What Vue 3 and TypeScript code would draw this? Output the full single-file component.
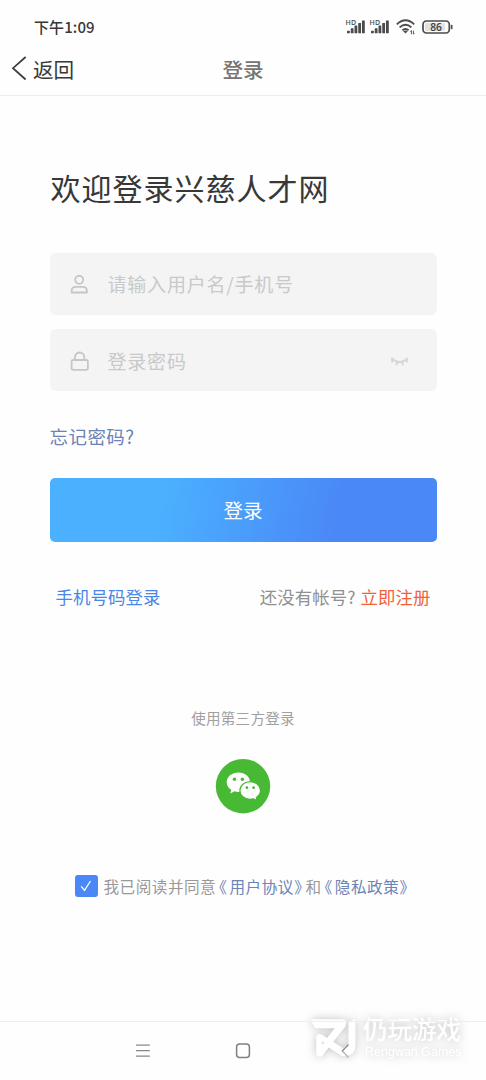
<script setup lang="ts">
import { ref } from 'vue'

const account = ref('')
const password = ref('')
const agreed = ref(true)
const bars: number[] = [0, 1, 2, 3, 4]
const documents: string[] = ['用户协议', '隐私政策']
</script>

<template>
  <div class="screen">
    <div class="status">
      <span class="time">下午1:09</span>
      <div class="indicators">
        <svg v-for="sim in 2" :key="sim" class="signal" width="20" height="16" viewBox="0 0 20 16">
          <text x="-.5" y="5.6" class="hd">HD</text>
          <rect v-for="b in bars" :key="b" :x="1 + b * 3.75" :y="11.8 - b * 2.6" width="2.8" :height="2.4 + b * 2.6" rx=".5" fill="#4b4b4b" />
        </svg>
        <svg class="wifi" width="20" height="16" viewBox="0 0 20 16" fill="none" stroke="#4b4b4b" stroke-width="1.9">
          <path d="M.8 5.4Q9.5-2.7 18.2 5.4M3.6 8.4Q9.5 3 15.4 8.4M6.4 11.3Q9.5 8.6 12.6 11.3" />
          <path d="M7.2 12.2Q9.5 10.8 11.8 12.2L9.5 14.6Z" fill="#4b4b4b" stroke="none" />
          <path d="M15.4 15.2V11.6l-1 1.2M17.4 11.6v3.6l1-1.2" stroke-width=".9" />
        </svg>
        <svg class="battery" width="32" height="14" viewBox="0 0 32 14">
          <rect x="1" y="1" width="26.3" height="12" rx="3.4" fill="#fff" stroke="#4b4b4b" stroke-width="1.7" />
          <rect x="3" y="3" width="20" height="8" rx="1.5" fill="#e2e2e2" />
          <rect x="28.8" y="4.8" width="1.7" height="4.5" rx=".8" fill="#4b4b4b" />
          <text x="14" y="10.7" text-anchor="middle" class="level">86</text>
        </svg>
      </div>
    </div>

    <header class="nav">
      <a class="back">
        <svg width="16" height="26" viewBox="0 0 16 26" fill="none" stroke="#3c3c3c" stroke-width="1.7"><path d="M14.6 2 2 13.2 14.6 24.5" /></svg>
        <span>返回</span>
      </a>
      <span class="nav-title">登录</span>
    </header>

    <main class="content">
      <h1>欢迎登录兴慈人才网</h1>
      <label class="field first">
        <svg width="20" height="20" viewBox="0 0 20 20" fill="none" stroke="#c6c6c6" stroke-width="1.8">
          <circle cx="9.2" cy="5.8" r="4" />
          <path d="M1.6 18.5V17Q1.6 12.8 6 12.8H12.6Q16.9 12.8 16.9 17V18.5Z" stroke-linejoin="round" />
        </svg>
        <input v-model="account" type="text" placeholder="请输入用户名/手机号" />
      </label>
      <label class="field second">
        <svg width="20" height="20" viewBox="0 0 20 20" fill="none" stroke="#c6c6c6" stroke-width="1.8">
          <rect x="1.6" y="9" width="16.3" height="9.8" rx="1.5" />
          <path d="M4.9 9V6.2a4.7 4.7 0 0 1 9.4 0V9" />
        </svg>
        <input v-model="password" type="password" placeholder="登录密码" />
        <svg class="eye" width="18" height="10" viewBox="0 0 18 10" fill="none" stroke="#d6d6d6">
          <path d="M.3 2Q9 10.2 16.7 2" stroke-width="2.4" />
          <path d="M1.8 3 1 6.4M6.2 5.8l-.8 3.4M11.1 5.8l.8 3.4M15.2 3 16.2 6.4" stroke-width="2" />
        </svg>
      </label>
      <a class="forgot">忘记密码?</a>
      <button class="submit" type="button">登录</button>
      <div class="links">
        <a class="phone">手机号码登录</a>
        <span class="register">还没有帐号?<a>立即注册</a></span>
      </div>
      <p class="third">使用第三方登录</p>
      <svg class="wechat" width="56" height="56" viewBox="0 0 56 56">
        <circle cx="28" cy="28.2" r="27.2" fill="#47b934" />
        <g transform="translate(.8 0)">
          <path d="M22.6 14.4c-6.6 0-11.7 4.4-11.7 9.8 0 3.1 1.7 5.9 4.6 7.6l-1 3.8 4.3-2.3c1.2.4 2.5.6 3.8.6 6.5 0 11.7-4.3 11.7-9.7s-5.2-9.8-11.7-9.8Z" fill="#fff" />
          <circle cx="18.7" cy="21.2" r="1.7" fill="#47b934" />
          <circle cx="26.6" cy="21.2" r="1.7" fill="#47b934" />
          <path d="M34.4 23.7c-5.7 0-10.3 3.9-10.3 8.8s4.6 8.8 10.3 8.8c1.2 0 2.3-.2 3.4-.5l3.6 2-.9-3.4c2.5-1.6 4.2-4.1 4.2-6.9 0-4.9-4.6-8.8-10.3-8.8Z" fill="#fff" stroke="#47b934" stroke-width="1.2" />
          <circle cx="31.1" cy="29.7" r="1.4" fill="#47b934" />
          <circle cx="37.8" cy="29.7" r="1.4" fill="#47b934" />
        </g>
      </svg>
      <div class="agreement">
        <span class="check" @click="agreed = !agreed">
          <svg v-if="agreed" width="12" height="12" viewBox="0 0 12 12" fill="none" stroke="#fff" stroke-width="1.3"><path d="M1.3 6.4 4.5 10.4 10.5 1" /></svg>
        </span>
        <span class="terms">我已阅读并同意<template v-for="(name, i) in documents" :key="name"><template v-if="i">和</template><a><span class="open">《</span>{{ name }}<span class="close">》</span></a></template></span>
      </div>
    </main>

    <footer class="system">
      <svg width="14" height="14" viewBox="0 0 14 14" stroke="#888" stroke-width="1.3"><path d="M0 1.2h13.8M0 6.7h13.8M0 12.2h13.8" /></svg>
      <svg width="16" height="16" viewBox="0 0 16 16" fill="none" stroke="#808080" stroke-width="1.5"><rect x="1.6" y="1" width="12.8" height="13.4" rx="3" /></svg>
      <svg width="14" height="14" viewBox="0 0 14 14" fill="none" stroke-width="1.4"><path d="M6.3 7 12.5 13.4" stroke="#b5b5b5" /><path d="M12.5.6 6 7.2" stroke="#8c8c8c" /></svg>
    </footer>

    <div class="watermark">
      <svg width="50" height="42" viewBox="0 0 50 42" fill="none" stroke="#fff" stroke-linejoin="round">
        <path d="M2.5 4.5H33Q36.5 5 34.5 8L32 11H6Q3.5 8 2.5 4.5Z" fill="#fff" stroke-width="2.4" />
        <path d="M32 9 9.8 37V21.5L33 36.5" stroke-width="7.2" stroke-linecap="round" />
        <path d="M44.4 4 39.5 7V28L33 33.5 35.5 39.2Q44.4 38.5 44.4 29Z" fill="#fff" stroke-width="2" />
        <circle cx="12.8" cy="27" r="1.4" fill="#e4e4e4" stroke="none" />
      </svg>
      <div class="brand">
        <strong>仍玩游戏</strong>
        <span>Rengwan Games</span>
      </div>
    </div>
  </div>
</template>

<style>
html, body { margin: 0; background: #fff; }
</style>

<style scoped>
.screen {
  position: relative;
  width: 486px;
  height: 1080px;
  overflow: hidden;
  display: flex;
  flex-direction: column;
  background: #fefefe;
  color: #383838;
  font-family: "Noto Sans CJK SC", sans-serif;
  box-sizing: border-box;
}
.screen * { box-sizing: border-box; }
svg { display: block; flex: none; overflow: visible; }
.status {
  height: 44px;
  flex: none;
  display: flex;
  justify-content: space-between;
  padding: 15px 32px 0 34px;
}
.time { font-size: 15px; line-height: 24px; font-weight: 500; letter-spacing: .1px; }
.indicators { display: flex; padding-top: 4px; }
.signal { margin-right: 4.3px; }
.hd { font: 600 7px "Open Sans", sans-serif; letter-spacing: .2px; fill: #4b4b4b; }
.wifi { margin-left: 1.4px; margin-right: 6px; }
.battery { margin-top: 1px; }
.level { font: 600 10.2px "Open Sans", sans-serif; fill: #3f3f3f; }
.nav {
  height: 52px;
  flex: none;
  display: grid;
  grid-template-columns: 1fr auto 1fr;
  border-bottom: 1px solid #eee;
  line-height: 50px;
}
.back { display: flex; padding-left: 11px; font-size: 20.6px; }
.back svg { margin: 11px 6px 0 0; }
.nav-title { font-size: 20.6px; font-weight: 500; color: #757575; }
.content { padding: 0 49.5px; display: flex; flex-direction: column; flex: 1; }
h1 { margin: 69px 0 0 1px; font-size: 30px; line-height: 44px; font-weight: 400; letter-spacing: 1px; white-space: nowrap; }
.field {
  display: flex;
  align-items: center;
  height: 62px;
  background: #f4f4f4;
  border-radius: 6px;
  padding: 0 28px 0 20px;
}
.first { margin-top: 44px; }
.second { margin-top: 14px; padding-top: 1px; }
input {
  flex: 1;
  min-width: 0;
  margin-left: 18px;
  padding: 0;
  border: 0;
  outline: 0;
  background: transparent;
  font: 400 19px/30px "Noto Sans CJK SC", sans-serif;
  letter-spacing: .8px;
}
input::placeholder { color: #c9c9c9; opacity: 1; }
.forgot { margin-top: 31px; font-size: 18.5px; line-height: 28px; letter-spacing: .45px; color: #6b83b5; }
.submit {
  margin-top: 28px;
  height: 64px;
  flex: none;
  padding: 0;
  border: 0;
  border-radius: 5px;
  background: linear-gradient(100deg, #4bb1ff 28%, #4a87f7 75%);
  color: #fff;
  font: 400 19.5px/64px "Noto Sans CJK SC", sans-serif;
}
.links { display: flex; justify-content: space-between; margin-top: 42px; padding: 0 6px; font-size: 17.4px; line-height: 26px; letter-spacing: .1px; }
.phone { color: #4a86e8; }
.register { color: #909090; }
.register a { margin-left: 5px; color: #f26137; }
.third { margin: 97px 0 0; text-align: center; font-size: 14.6px; letter-spacing: .2px; line-height: 22px; color: #a0a0a0; }
.wechat { margin: 29px auto 0; }
.agreement { display: flex; align-items: center; height: 24px; margin: 60px 0 0 25px; }
.check { width: 23px; height: 22px; border-radius: 3px; background: #4a87f7; display: grid; place-items: center; }
.terms { margin-left: 6px; color: #999; font-size: 15.6px; letter-spacing: .5px; white-space: nowrap; font-feature-settings: "halt"; }
.terms a { color: #6b83b5; }
.open { margin: 0 2px 0 3px; }
.close { margin: 0 3px 0 .3px; }
.system {
  position: relative;
  z-index: 1;
  height: 59px;
  flex: none;
  display: flex;
  align-items: center;
  justify-content: space-between;
  border-top: 1px solid #eee;
  padding: 0 136px;
}
.watermark {
  position: absolute;
  left: 310px;
  top: 1016px;
  display: flex;
  filter: drop-shadow(0 0 5px rgba(0, 0, 0, .25));
  color: #fff;
}
.brand { display: flex; flex-direction: column; margin-left: 3px; white-space: nowrap; }
.brand strong { font-size: 24.5px; line-height: 25px; font-weight: 500; }
.brand span { margin: 4px 0 0 2px; font: 12.5px/14px "Liberation Sans", sans-serif; }
</style>
